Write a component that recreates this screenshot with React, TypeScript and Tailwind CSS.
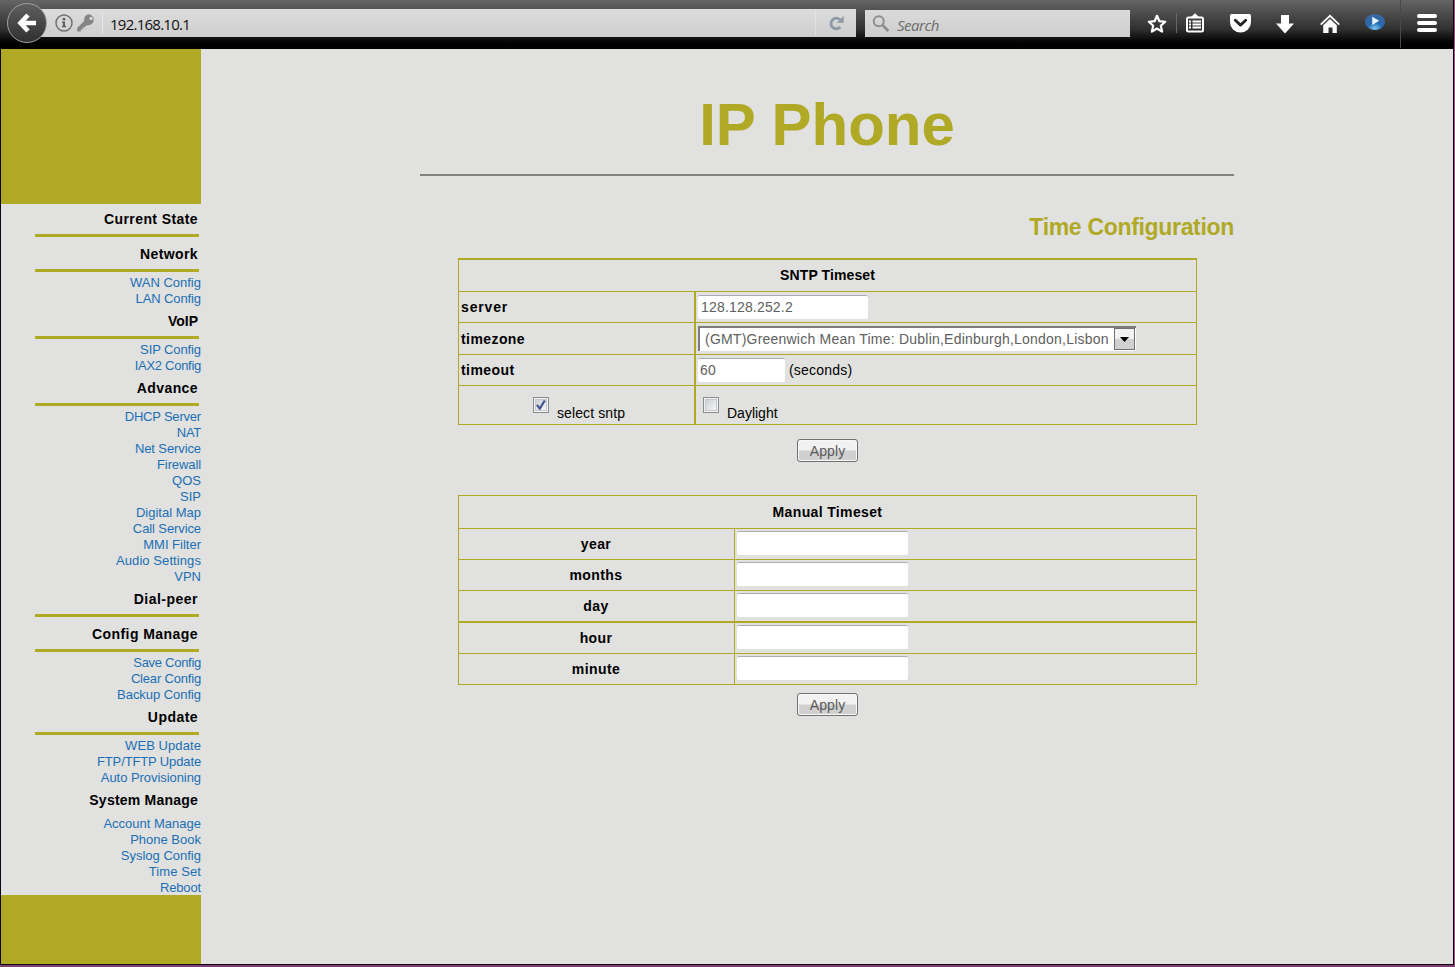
import React from "react";

type Section = { title: string; rule: boolean; links: { text: string; cls: string }[]; cls: string };

const L = (text: string, cls = "tracking-[0px]") => ({ text, cls });

const sections: Section[] = [
  { title: "Current State", rule: true, cls: "tracking-[0.41px]", links: [] },
  { title: "Network", rule: true, cls: "tracking-[0.4px]", links: [L("WAN Config"), L("LAN Config", "tracking-[-0.1px]")] },
  { title: "VoIP", rule: true, cls: "tracking-[0px]", links: [L("SIP Config", "tracking-[-0.1px]"), L("IAX2 Config", "tracking-[-0.28px]")] },
  {
    title: "Advance",
    rule: true,
    cls: "tracking-[0.4px]",
    links: [
      L("DHCP Server", "tracking-[-0.2px]"),
      L("NAT", "tracking-[-0.3px]"),
      L("Net Service", "tracking-[-0.1px]"),
      L("Firewall", "tracking-[-0.1px]"),
      L("QOS"),
      L("SIP"),
      L("Digital Map"),
      L("Call Service", "tracking-[-0.1px]"),
      L("MMI Filter"),
      L("Audio Settings", "tracking-[0.08px]"),
      L("VPN"),
    ],
  },
  { title: "Dial-peer", rule: true, cls: "tracking-[0.48px]", links: [] },
  {
    title: "Config Manage",
    rule: true,
    cls: "tracking-[0.44px]",
    links: [L("Save Config", "tracking-[-0.28px]"), L("Clear Config", "tracking-[-0.18px]"), L("Backup Config", "tracking-[-0.05px]")],
  },
  {
    title: "Update",
    rule: true,
    cls: "tracking-[0.45px]",
    links: [L("WEB Update", "tracking-[0.08px]"), L("FTP/TFTP Update", "tracking-[-0.13px]"), L("Auto Provisioning", "tracking-[-0.06px]")],
  },
  {
    title: "System Manage",
    rule: false,
    cls: "tracking-[0.22px]",
    links: [L("Account Manage"), L("Phone Book"), L("Syslog Config"), L("Time Set", "tracking-[0.1px]"), L("Reboot", "tracking-[-0.15px]")],
  },
];

function Toolbar() {
  return (
    <header className="relative flex h-[49px] w-full shrink-0 bg-linear-to-b from-[#656565] via-[#303030] via-60% to-black font-['Open_Sans',sans-serif]">
      <div className="mt-[9px] ml-[26px] flex h-[28px] w-[830px] items-center bg-linear-to-b from-[#dcdcdc] to-[#cecece]">
        <svg className="ml-[28px] h-[20px] w-[20px] shrink-0" viewBox="0 0 20 20">
          <circle cx="10" cy="10" r="8" fill="none" stroke="#707070" strokeWidth="1.5" />
          <circle cx="10" cy="6.2" r="1.4" fill="#606060" />
          <path d="M8 8.6h3v4.2h1v1.4H8v-1.4h.9V10H8z" fill="#606060" />
        </svg>
        <svg className="ml-[2px] h-[20px] w-[20px] shrink-0" viewBox="0 0 20 20">
          <path
            fillRule="evenodd"
            fill="#858585"
            d="M13.5 1.200a5.400 5.400 0 0 0-5.300 6.800L1.200 15v3.600h3.600v-2h2v-2h1.600l2.200-2.400A5.500 5.500 0 1 0 13.500 1.200zm1.600 2.600a1.700 1.700 0 1 1 0 3.400 1.700 1.700 0 0 1 0-3.400z"
          />
        </svg>
        <div className="ml-[6px] h-[22px] w-px bg-[#e6e6e6]" />
        <span className="ml-[7px] w-[705px] pt-[2px] text-[15px] leading-[20px] tracking-[-0.75px] text-[#111]">192.168.10.1</span>
        <div className="h-[24px] w-px bg-[#e2e2e2]" />
        <svg className="ml-[12px] h-[16px] w-[16px] shrink-0" viewBox="0 0 16 16">
          <path d="M12.300 11.900A5.300 5.300 0 1 1 11.800 4.500" fill="none" stroke="#8e99a5" strokeWidth="2.800" />
          <path d="M15.600 1v6.800H8.800z" fill="#8e99a5" />
        </svg>
      </div>
      <div className="mt-[10px] ml-[9px] flex h-[27px] w-[265px] items-center bg-linear-to-b from-[#dadada] to-[#cecece]">
        <svg className="ml-[7px] h-[18px] w-[18px]" viewBox="0 0 18 18">
          <circle cx="6.800" cy="6.300" r="5" fill="none" stroke="#8f8f8f" strokeWidth="2" />
          <path d="M10.400 10l6 6" stroke="#8f8f8f" strokeWidth="2.800" />
        </svg>
        <span className="ml-[7px] pt-[2px] text-[15px] leading-[20px] tracking-[-0.5px] text-[#6c6c6c] italic">Search</span>
      </div>
      <div className="flex h-[48px] items-center">
        <svg className="ml-[17px] h-[20px] w-[20px]" viewBox="0 0 20 20">
          <path d="M10 1.800l2.400 5.400 5.800.600-4.400 3.900 1.300 5.900-5.100-3.100-5.100 3.100 1.300-5.900L1.800 7.800l5.800-.600z" fill="none" stroke="#fff" strokeWidth="2.200" strokeLinejoin="round" />
        </svg>
        <div className="mb-[2px] ml-[9px] h-[20px] w-px bg-[#666]" />
        <svg className="mb-[2px] ml-[8px] h-[20px] w-[20px]" viewBox="0 0 20 20">
          <rect x="2" y="4.500" width="16" height="14" rx="1.500" fill="none" stroke="#fff" strokeWidth="2" />
          <path d="M5.500 4.500L10 .2l4.500 4.300z" fill="#fff" />
          <path d="M4 8.500h2M4 11.500h2M4 14.500h2M7.500 8.500H16M7.500 11.500H16M7.500 14.500H16" stroke="#fff" strokeWidth="1.800" />
        </svg>
        <svg className="mb-[2px] ml-[25px] h-[20px] w-[21px]" viewBox="0 0 21 20">
          <path d="M1.600 1h17.800Q21 1 21 2.600V9a10.500 10.500 0 0 1-21 0V2.600Q0 1 1.600 1z" fill="#fff" />
          <path d="M5.300 7.300l5.200 4.800 5.200-4.800" fill="none" stroke="#252525" strokeWidth="2.800" strokeLinecap="round" strokeLinejoin="round" />
        </svg>
        <svg className="mb-[1px] ml-[25px] h-[20px] w-[18px]" viewBox="0 0 18 20">
          <path d="M5 1h8v8.500h5L9 19.500 0 9.500h5z" fill="#fff" />
        </svg>
        <svg className="mb-[1px] ml-[26px] h-[20px] w-[20px]" viewBox="0 0 20 20">
          <path d="M.7 10.600L10 1.800l9.300 8.800" fill="none" stroke="#fff" strokeWidth="1.800" />
          <path d="M10 5l6.800 6.300V19h-4.300v-5.500h-4V19H3.200v-7.700z" fill="#fff" />
        </svg>
        <svg className="mb-[3px] ml-[25px] h-[20px] w-[20px]" viewBox="0 0 20 20">
          <defs>
            <radialGradient id="orb" cx="50%" cy="90%" r="80%">
              <stop offset="0" stopColor="#7cc8f0" />
              <stop offset="0.450" stopColor="#2468ae" />
              <stop offset="1" stopColor="#3a679e" />
            </radialGradient>
          </defs>
          <ellipse cx="10" cy="9" rx="10" ry="8" fill="url(#orb)" />
          <path d="M7.200 3.800l7 4-7 4.200z" fill="#e4f1fb" />
        </svg>
      </div>
      <div className="ml-[15px] h-[48px] w-px bg-[#484848]" />
      <div className="mt-[14px] ml-[16px] flex flex-col gap-[3px]">
        <div className="h-[4px] w-[20px] rounded-full bg-white" />
        <div className="h-[4px] w-[20px] rounded-full bg-white" />
        <div className="h-[4px] w-[20px] rounded-full bg-white" />
      </div>
      <div className="absolute top-[3px] left-[7px] flex h-[40px] w-[40px] items-center justify-center rounded-full border border-[#a0a0a0] bg-linear-to-b from-[#606060] to-[#303030]">
        <svg className="h-[20px] w-[20px]" viewBox="0 0 20 20">
          <path d="M11 2L3.500 10l7.500 8M4 10h15" fill="none" stroke="#fff" strokeWidth="4.600" />
        </svg>
      </div>
    </header>
  );
}

function Sidebar() {
  return (
    <aside className="flex w-[200px] shrink-0 flex-col">
      <div className="h-[155px] bg-[#b0a926]" />
      {sections.map((s) => (
        <div key={s.title}>
          <div className={`h-[30px] pr-[3px] text-right text-[14px] leading-[30px] font-bold text-black ${s.cls}`}>{s.title}</div>
          {s.rule && <div className="mr-[2px] mb-[2px] ml-[34px] h-[3px] bg-[#b0a926]" />}
          {s.links.map((l) => (
            <div key={l.text} className={`h-[16px] text-right text-[13px] leading-[18px] whitespace-nowrap text-[#1b6fb5] ${l.cls}`}>
              {l.text}
            </div>
          ))}
        </div>
      ))}
      <div className="h-[69px] bg-[#b0a926]" />
    </aside>
  );
}

function Field({ value = "", className = "" }: { value?: string; className?: string }) {
  return (
    <input
      defaultValue={value}
      className={`h-[24px] rounded-[2px] border-t border-[#a9abb3] bg-white pb-[2px] text-[14px] text-[#606060] outline-none ${className}`}
    />
  );
}

function Check({ checked = false, className = "" }: { checked?: boolean; className?: string }) {
  return (
    <div className={`h-[16px] w-[16px] border border-[#8a8b8c] bg-[#f4f4f4] p-px ${className}`}>
      <div className="h-[12px] w-[12px] border border-[#c4c8ce] bg-linear-to-br from-[#cdd0d5] to-[#f6f6f6]">
        {checked && (
          <svg className="h-[10px] w-[10px]" viewBox="0 0 10 10">
            <path d="M1 4.800l2.800 3.800L8.800.500" fill="none" stroke="#42548f" strokeWidth="2.200" />
          </svg>
        )}
      </div>
    </div>
  );
}

function Apply({ className = "" }: { className?: string }) {
  return (
    <button
      className={`block h-[23px] w-[61px] rounded-[3px] border border-[#707070] bg-linear-to-b from-[#f2f2f2] from-45% to-[#d0d0d0] to-55% text-[14px] leading-[21px] tracking-[0.1px] text-[#5a5a5a] shadow-[inset_0_0_0_1px_#f8f8f8] ${className}`}
    >
      <span className="block pt-px">Apply</span>
    </button>
  );
}

function SntpTable() {
  const left = "w-[235px] shrink-0 pl-[2px] text-[14px] font-bold";
  const right = "flex flex-1 self-stretch border-l-2 border-[#b0a926] pl-[2px]";
  return (
    <div className="mt-[16px] ml-[257px] w-[739px] border border-t-2 border-[#b0a926]">
      <div className="flex h-[32px] items-center justify-center border-b border-[#b0a926] text-[14px] font-bold tracking-[0.1px]">SNTP Timeset</div>
      <div className="flex h-[31px] items-center border-b border-[#b0a926]">
        <div className={`${left} tracking-[0.85px]`}>server</div>
        <div className={right}>
          <Field value="128.128.252.2" className="mt-[3px] w-[170px] pl-[3px] tracking-[0.18px]" />
        </div>
      </div>
      <div className="flex h-[32px] items-center border-b border-[#b0a926]">
        <div className={`${left} pt-px tracking-[0.42px]`}>timezone</div>
        <div className={right}>
          <div className="mt-[3px] flex h-[25px] w-[438px] border-t-2 border-l-2 border-[#7c7c7c] bg-white">
            <span className="w-[414px] shrink-0 pl-[5px] text-[14px] leading-[22px] tracking-[0.22px] whitespace-nowrap text-[#606060]">
              (GMT)Greenwich Mean Time: Dublin,Edinburgh,London,Lisbon
            </span>
            <div className="flex h-[22px] w-[21px] items-center justify-center border border-[#707070] bg-linear-to-b from-[#f2f2f2] from-45% to-[#d0d0d0] to-55%">
              <svg className="h-[5px] w-[9px]" viewBox="0 0 9 5">
                <path d="M0 0h9L4.500 5z" fill="#000" />
              </svg>
            </div>
          </div>
        </div>
      </div>
      <div className="flex h-[31px] items-center border-b border-[#b0a926]">
        <div className={`${left} tracking-[0.42px]`}>timeout</div>
        <div className={right}>
          <Field value="60" className="mt-[3px] w-[87px] pl-[2px] tracking-[0.3px]" />
          <span className="ml-[4px] text-[14px] leading-[30px] tracking-[0.2px]">(seconds)</span>
        </div>
      </div>
      <div className="flex h-[38px]">
        <div className="flex w-[235px] shrink-0">
          <Check checked className="mt-[11px] ml-[74px]" />
          <span className="mt-[17px] ml-[8px] text-[14px] leading-[20px] tracking-[0.1px]">select sntp</span>
        </div>
        <div className="flex flex-1 border-l-2 border-[#b0a926]">
          <Check className="mt-[11px] ml-[7px]" />
          <span className="mt-[17px] ml-[8px] text-[14px] leading-[20px]">Daylight</span>
        </div>
      </div>
    </div>
  );
}

const manualRows = [
  { label: "year", edge: "border-b h-[31px]" },
  { label: "months", edge: "border-b h-[31px]" },
  { label: "day", edge: "border-b-2 h-[32px]" },
  { label: "hour", edge: "border-b h-[31px]" },
  { label: "minute", edge: "h-[30px]" },
];

function ManualTable() {
  return (
    <div className="mt-[33px] ml-[257px] w-[739px] border border-[#b0a926]">
      <div className="flex h-[33px] items-center justify-center border-b border-[#b0a926] text-[14px] font-bold tracking-[0.36px]">Manual Timeset</div>
      {manualRows.map((r) => (
        <div key={r.label} className={`flex items-center border-[#b0a926] ${r.edge}`}>
          <div className="w-[275px] pr-px text-center text-[14px] font-bold tracking-[0.4px]">{r.label}</div>
          <div className="flex flex-1 self-stretch border-l border-[#b0a926] pl-[2px]">
            <Field className="mt-[2px] w-[171px]" />
          </div>
        </div>
      ))}
    </div>
  );
}

export default function App() {
  return (
    <div className="flex h-[967px] w-[1455px] flex-col overflow-hidden border-r border-b-2 border-r-[#9b4d7c] border-b-[#843a76] bg-[#e1e1df] font-['Liberation_Sans',Arial,sans-serif] text-black">
      <div className="flex flex-1 flex-col border-r border-b border-l border-[#0a0510]">
        <div className="-ml-px w-[1453px]">
          <Toolbar />
        </div>
        <div className="flex flex-1">
          <Sidebar />
          <main className="flex-1">
            <h1 className="mt-[42px] ml-[219px] w-[814px] text-center text-[60px] leading-[68px] font-bold text-[#b0a926]">IP Phone</h1>
            <div className="mt-[15px] ml-[219px] h-[2px] w-[814px] bg-[#82837f]" />
            <h2 className="mt-[37px] ml-[219px] w-[814px] text-right text-[23px] leading-[29px] font-bold tracking-[-0.32px] text-[#b0a926]">Time Configuration</h2>
            <SntpTable />
            <Apply className="mt-[14px] ml-[596px]" />
            <ManualTable />
            <Apply className="mt-[8px] ml-[596px]" />
          </main>
        </div>
      </div>
    </div>
  );
}
